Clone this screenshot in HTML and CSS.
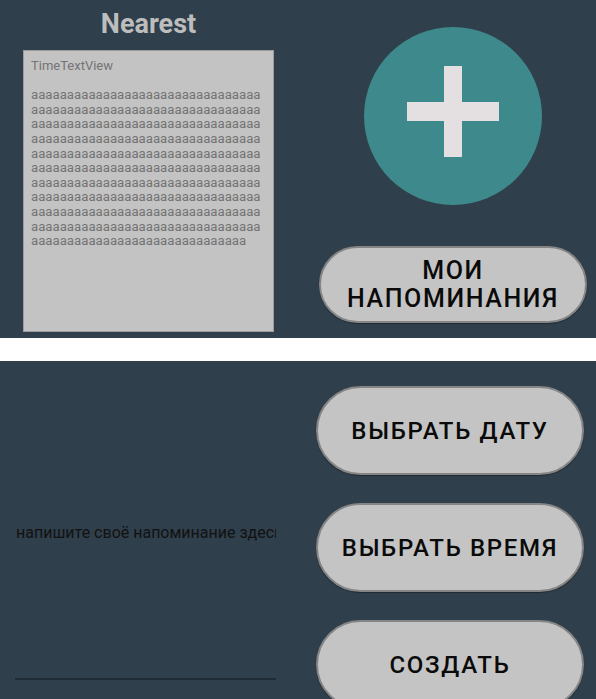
FILE: index.html
```html
<!DOCTYPE html>
<html lang="ru">
<head>
<meta charset="utf-8">
<title>Nearest</title>
<link rel="stylesheet" href="styles.css">
</head>
<body>
<section class="panel panel-top">
  <div class="col-left">
    <h1 class="title">Nearest</h1>
    <div class="nearest-box">TimeTextView<br><br><span class="aaa">aaaaaaaaaaaaaaaaaaaaaaaaaaaaaaaaaaaaaaaaaaaaaaaaaaaaaaaaaaaaaaaaaaaaaaaaaaaaaaaaaaaaaaaaaaaaaaaaaaaaaaaaaaaaaaaaaaaaaaaaaaaaaaaaaaaaaaaaaaaaaaaaaaaaaaaaaaaaaaaaaaaaaaaaaaaaaaaaaaaaaaaaaaaaaaaaaaaaaaaaaaaaaaaaaaaaaaaaaaaaaaaaaaaaaaaaaaaaaaaaaaaaaaaaaaaaaaaaaaaaaaaaaaaaaaaaaaaaaaaaaaaaaaaaaaaaaaaaaaaaaaaaaaaaaaaaaaaaaaaaaaaaaaaaaaaaaaaaaaaaaaaaaaaaaa</span></div>
  </div>
  <div class="col-right">
    <button class="fab" aria-label="Добавить">
      <svg width="178" height="178" viewBox="0 0 178 178">
        <circle cx="89" cy="89" r="89" fill="#3e898c"/>
        <rect x="43" y="75" width="92" height="19" fill="#e4e0e1"/>
        <rect x="80" y="39" width="18" height="91" fill="#e4e0e1"/>
      </svg>
    </button>
    <button class="pill pill-two">МОИ<br>НАПОМИНАНИЯ</button>
  </div>
</section>
<section class="panel panel-bottom">
  <div class="edit-col">
    <div class="edit-field"><span class="hint">напишите своё напоминание здесь</span></div>
  </div>
  <div class="btn-col">
    <button class="pill">ВЫБРАТЬ ДАТУ</button>
    <button class="pill">ВЫБРАТЬ ВРЕМЯ</button>
    <button class="pill">СОЗДАТЬ</button>
  </div>
</section>
</body>
</html>
```
FILE: styles.css
```css
html, body {
  margin: 0;
  padding: 0;
  background: #ffffff;
  font-family: Roboto, "Noto Sans", sans-serif;
  overflow: hidden;
}

.panel {
  background: #2f3f4b;
  display: grid;
}

.panel-top {
  height: 338px;
  grid-template-columns: 297px 1fr;
}

.panel-bottom {
  margin-top: 23px;
  height: 338px;
  grid-template-columns: 316px 1fr;
  overflow: hidden;
}

.col-left {
  display: flex;
  flex-direction: column;
  align-items: center;
}

.title {
  margin: 9px 0 0;
  font-size: 27px;
  font-weight: 700;
  line-height: 31px;
  color: #bdbdbd;
}

.nearest-box {
  box-sizing: border-box;
  margin-top: 10px;
  width: 251px;
  height: 282px;
  background: #c3c3c3;
  border: 1px solid #9c9c9c;
  padding: 8px 9px 8px 7px;
  font-size: 13px;
  line-height: 14.6px;
  color: #737373;
}

.aaa {
  word-break: break-all;
  font-size: 13.2px;
}

.col-right {
  padding-left: 13px;
  display: flex;
  flex-direction: column;
  align-items: center;
}

.fab {
  margin-top: 27px;
  width: 178px;
  height: 178px;
  padding: 0;
  border: 0;
  background: none;
  display: block;
}

.fab svg {
  display: block;
}

.pill {
  box-sizing: border-box;
  width: 268px;
  height: 89px;
  border-radius: 45px;
  border: 2px solid #858585;
  background: #c4c4c4;
  box-shadow: 0 1px 1px rgba(0, 0, 0, 0.35);
  font-family: Roboto, "Noto Sans", sans-serif;
  font-size: 24px;
  font-weight: 500;
  letter-spacing: 0.07em;
  color: #0a0a0a;
  padding: 0;
  display: flex;
  align-items: center;
  justify-content: center;
  text-align: center;
}

.pill-two {
  margin-top: 41px;
  height: 77px;
  border-radius: 39px;
  font-size: 25px;
  line-height: 28px;
  letter-spacing: 0.065em;
}

.edit-col {
  padding: 25px 0 0 15px;
}

.edit-field {
  box-sizing: border-box;
  width: 261px;
  height: 294px;
  border-bottom: 2px solid #1f2c35;
  display: flex;
  align-items: center;
  overflow: hidden;
}

.hint {
  white-space: nowrap;
  font-size: 16px;
  color: #121212;
  padding-left: 1px;
}

.btn-col {
  padding-top: 25px;
  display: flex;
  flex-direction: column;
  gap: 28px;
}
```
